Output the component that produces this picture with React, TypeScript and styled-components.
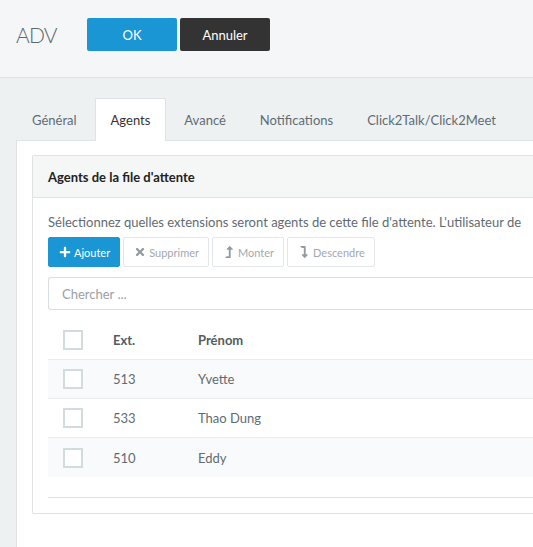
import React from "react";
import styled, { createGlobalStyle } from "styled-components";
import { FaPlus, FaTimes, FaLevelUpAlt, FaLevelDownAlt } from "react-icons/fa";

const Global = createGlobalStyle`
  html, body { margin: 0; padding: 0; }
  body {
    font-family: Lato, "Noto Sans", sans-serif;
    background: #eef1f2;
    color: #555;
    overflow: hidden;
  }
  * { box-sizing: border-box; }
`;

const Page = styled.div`
  width: 533px;
  height: 547px;
  overflow: hidden;
  background: #eef1f2;
`;

const TopBar = styled.header`
  height: 78px;
  background: #f4f6f7;
  border-bottom: 1px solid #dfe3e5;
  display: flex;
  align-items: flex-start;
  padding: 18px 0 0 16px;
`;

const Title = styled.h1`
  width: 71px;
  margin: 2px 0 0 0;
  font-size: 21px;
  font-weight: 300;
  letter-spacing: -0.8px;
  color: #5a6870;
  line-height: 30px;
`;

const HeadButton = styled.button<{ $variant: "primary" | "dark" }>`
  width: 90px;
  height: 33px;
  margin-right: 3px;
  border: none;
  border-radius: 2px;
  font-family: inherit;
  font-size: 13px;
  color: #fff;
  background: ${(p) => (p.$variant === "primary" ? "#1a96d4" : "#333333")};
`;

const Main = styled.main`
  padding: 20px 0 0 16px;
`;

const Tabs = styled.nav`
  display: flex;
  height: 42px;
`;

const Tab = styled.div<{ $active?: boolean }>`
  padding: 0 15px;
  margin-right: 2px;
  height: 43px;
  line-height: 42px;
  font-size: 13px;
  white-space: nowrap;
  color: ${(p) => (p.$active ? "#333" : "#5f6b72")};
  background: ${(p) => (p.$active ? "#fff" : "transparent")};
  border: 1px solid ${(p) => (p.$active ? "#dfe3e5" : "transparent")};
  border-bottom: none;
  position: relative;
  z-index: 1;
`;

const Panel = styled.section`
  background: #fff;
  border-top: 1px solid #dfe3e5;
  border-left: 1px solid #dfe3e5;
  padding: 14px 0 40px 15px;
`;

const Card = styled.div`
  border: 1px solid #dfe3e5;
  border-right: none;
  border-radius: 2px 0 0 2px;
  background: #fff;
`;

const CardHeader = styled.div`
  height: 42px;
  background: #f5f6f6;
  border-bottom: 1px solid #dfe3e5;
  padding-left: 15px;
  display: flex;
  align-items: center;
  font-size: 13px;
  font-weight: 700;
  color: #222;
`;

const CardBody = styled.div`
  padding: 14px 0 15px 15px;
`;

const Description = styled.p`
  margin: 0;
  font-size: 13px;
  line-height: 20px;
  color: #5f6b72;
  white-space: nowrap;
`;

const Toolbar = styled.div`
  display: flex;
  gap: 3px;
  margin-top: 5px;
`;

const ToolButton = styled.button<{ $primary?: boolean }>`
  height: 30px;
  padding: 0 9px 0 10px;
  display: inline-flex;
  align-items: center;
  gap: 3px;
  font-family: inherit;
  font-size: 11px;
  border-radius: 2px;
  border: 1px solid ${(p) => (p.$primary ? "#1a96d4" : "#e3e7e9")};
  background: ${(p) => (p.$primary ? "#1a96d4" : "#fff")};
  color: ${(p) => (p.$primary ? "#fff" : "#a3a9ac")};
  svg {
    font-size: 12px;
    color: ${(p) => (p.$primary ? "#fff" : "#959b9e")};
  }
`;

const Search = styled.input`
  display: block;
  width: 100%;
  height: 33px;
  margin-top: 10px;
  border: 1px solid #d8dee0;
  border-right: none;
  border-radius: 3px 0 0 3px;
  padding: 0 13px;
  font-family: inherit;
  font-size: 13px;
  color: #555;
  &::placeholder { color: #9aa0a4; }
`;

const Table = styled.div`
  margin-top: 10px;
`;

const Row = styled.div<{ $striped?: boolean; $head?: boolean; $last?: boolean }>`
  display: grid;
  grid-template-columns: 50px 85px 1fr;
  align-items: center;
  height: ${(p) => (p.$head ? "40px" : "39px")};
  border-bottom: ${(p) => (p.$last ? "none" : "1px solid #e8ecee")};
  background: ${(p) => (p.$striped ? "#f9fafb" : "#fff")};
  font-size: 13px;
  font-weight: ${(p) => (p.$head ? 700 : 400)};
  color: ${(p) => (p.$head ? "#555c60" : "#5f6b72")};
`;

const Cell = styled.div`
  padding-left: 15px;
  white-space: nowrap;
`;

const Check = styled.span`
  display: block;
  width: 20px;
  height: 20px;
  border: 2px solid #d3dcdd;
  background: #fff;
`;

const TableFooter = styled.div`
  margin-top: 20px;
  border-top: 1px solid #dfe3e5;
`;

const agents = [
  { ext: "513", name: "Yvette" },
  { ext: "533", name: "Thao Dung" },
  { ext: "510", name: "Eddy" },
];

export default function App() {
  return (
    <Page>
      <Global />
      <TopBar>
        <Title>ADV</Title>
        <HeadButton $variant="primary">OK</HeadButton>
        <HeadButton $variant="dark">Annuler</HeadButton>
      </TopBar>
      <Main>
        <Tabs>
          <Tab>Général</Tab>
          <Tab $active>Agents</Tab>
          <Tab>Avancé</Tab>
          <Tab>Notifications</Tab>
          <Tab>Click2Talk/Click2Meet</Tab>
        </Tabs>
        <Panel>
          <Card>
            <CardHeader>Agents de la file d'attente</CardHeader>
            <CardBody>
              <Description>
                Sélectionnez quelles extensions seront agents de cette file d'attente. L'utilisateur de
              </Description>
              <Toolbar>
                <ToolButton $primary>
                  <FaPlus /> Ajouter
                </ToolButton>
                <ToolButton>
                  <FaTimes /> Supprimer
                </ToolButton>
                <ToolButton>
                  <FaLevelUpAlt /> Monter
                </ToolButton>
                <ToolButton>
                  <FaLevelDownAlt /> Descendre
                </ToolButton>
              </Toolbar>
              <Search placeholder="Chercher ..." />
              <Table>
                <Row $head>
                  <Cell><Check /></Cell>
                  <Cell>Ext.</Cell>
                  <Cell>Prénom</Cell>
                </Row>
                {agents.map((a, i) => (
                  <Row key={a.ext} $striped={i % 2 === 0} $last={i === agents.length - 1}>
                    <Cell><Check /></Cell>
                    <Cell>{a.ext}</Cell>
                    <Cell>{a.name}</Cell>
                  </Row>
                ))}
              </Table>
              <TableFooter />
            </CardBody>
          </Card>
        </Panel>
      </Main>
    </Page>
  );
}
